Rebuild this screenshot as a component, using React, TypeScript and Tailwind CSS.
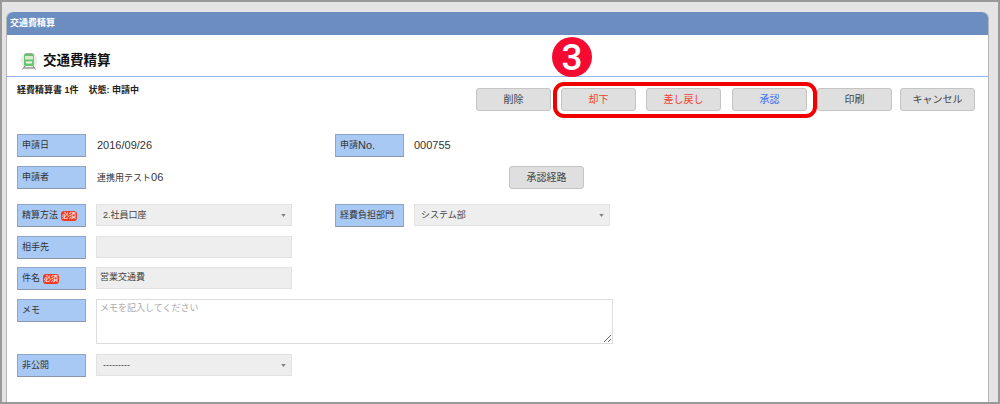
const font = {
  fontFamily: '"Liberation Sans", "Noto Sans CJK JP", sans-serif',
};

function TrainIcon() {
  return (
    <svg width="18" height="20" viewBox="0 0 18 20" className="shrink-0">
      <circle cx="9" cy="10" r="8.5" fill="#ececec" />
      <path d="M5 2.5h8l1 1V14l-1 1H5l-1-1V3.500z" fill="#67c56b" />
      <rect x="5" y="5" width="8" height="3.500" fill="#d8ecd0" />
      <rect x="6" y="2.500" width="6" height="1.200" fill="#8a9a8a" />
      <path d="M5.500 10.500h7l-1 2h-5z" fill="#f4f4f4" />
      <path d="M5 15l-2.500 3.500M13 15l2.500 3.500M4 17h10" stroke="#777" strokeWidth="1" fill="none" />
    </svg>
  );
}

function Btn({ label, color = "text-[#444]", className = "" }: { label: string; color?: string; className?: string }) {
  return (
    <button className={`h-[23px] w-[75px] rounded-[3px] border border-[#c4c4c4] bg-[#dfdfdf] text-[10px] ${color} ${className}`}>
      {label}
    </button>
  );
}

function Required() {
  return (
    <span className="ml-[3px] inline-flex h-[10px] w-[16px] items-center justify-center rounded-[3px] bg-[#ee3a22] text-[7px] leading-none text-white">
      必須
    </span>
  );
}

function Label({ text, required, children }: { text?: string; required?: boolean; children?: React.ReactNode }) {
  return (
    <div className="flex h-[23px] w-[69px] shrink-0 items-center border border-[#8ea6c8] border-b-[#8a96a8] bg-[#a9c9f5] pl-[4px] text-[9px] text-[#333]">
      {text}
      {children}
      {required && <Required />}
    </div>
  );
}

function SelectBox({ value }: { value: string }) {
  return (
    <div className="flex h-[22px] w-[196px] items-center justify-between border border-[#e2e2e2] bg-[#eeeeee] pl-[6px] pr-[5px] pt-[1px] text-[9px] text-[#444]">
      {value}
      <svg width="5" height="3" viewBox="0 0 6 4">
        <path d="M0 0h6L3 4z" fill="#808080" />
      </svg>
    </div>
  );
}

function Field({ label, required, children }: { label: React.ReactNode; required?: boolean; children?: React.ReactNode }) {
  return (
    <div className="flex w-[318px] shrink-0 items-start gap-[10px]">
      <Label required={required}>{label}</Label>
      {children}
    </div>
  );
}

export default function App() {
  return (
    <div style={font} className="flex h-[404px] w-[1000px] flex-col overflow-hidden border-2 border-b-2 border-[#999999] bg-[#e4e4e4] pl-[4px] pr-[9px] pt-[10px]">
      <div className="flex flex-1 flex-col rounded-t-[6px] border-x border-[#b5b5b5] bg-white">
        <div className="flex h-[23px] shrink-0 items-center rounded-t-[6px] bg-[#6b8dbf] pl-[3px] text-[9px] font-bold text-white">
          交通費精算
        </div>

        <div className="flex h-[42px] shrink-0 items-center gap-[5px] border-b border-[#93b6f2] pl-[13px] pt-[11px]">
          <TrainIcon />
          <span className="text-[13.500px] font-bold text-[#111]">交通費精算</span>
        </div>

        <div className="mt-[6px] flex h-[28px] shrink-0 items-start justify-between pl-[10px] pr-[13px]">
          <div className="pt-[1px] text-[9px] font-bold text-[#222]">
            経費精算書 1件<span className="ml-[10px]">状態: 申請中</span>
          </div>
          <div className="mt-[5px] flex items-start">
            <Btn label="削除" className="mr-[10px]" />
            <div className="relative flex gap-[10px]">
              <Btn label="却下" color="text-[#f0442e]" />
              <Btn label="差し戻し" color="text-[#f0442e]" />
              <Btn label="承認" color="text-[#3a74f0]" className="ml-[1px]" />
              <div className="absolute -bottom-[7px] -left-[8px] -right-[10px] -top-[6px] rounded-[11px] border-[4px] border-[#f00000]" />
              <div
                style={{ fontFamily: "Roboto, sans-serif" }}
                className="absolute -left-[9px] -top-[51px] flex h-[40px] w-[40px] items-center justify-center rounded-full bg-[#f50a32] text-[37px] font-medium leading-none text-white"
              >
                3
              </div>
            </div>
            <Btn label="印刷" className="ml-[10px]" />
            <Btn label="キャンセル" className="ml-[8px]" />
          </div>
        </div>

        <div className="mt-[23px] flex flex-col pl-[10px]">
          <div className="flex h-[23px]">
            <Field label="申請日">
              <span className="pl-[1px] pt-[3px] text-[11px] text-[#333]">2016/09/26</span>
            </Field>
            <Field label={<>申請<span className="text-[11px]">No.</span></>}>
              <span className="pt-[3px] text-[11px] text-[#333]">000755</span>
            </Field>
          </div>

          <div className="mt-[9px] flex h-[23px]">
            <Field label="申請者">
              <span className="pl-[1px] pt-[3px] text-[9px] text-[#333]">
                連携用テスト<span className="text-[11px]">06</span>
              </span>
            </Field>
            <div className="ml-[174px] flex">
              <Btn label="承認経路" />
            </div>
          </div>

          <div className="mt-[15px] flex h-[23px]">
            <Field label="精算方法" required>
              <SelectBox value="2.社員口座" />
            </Field>
            <Field label="経費負担部門">
              <SelectBox value="システム部" />
            </Field>
          </div>

          <div className="mt-[9px] flex h-[23px]">
            <Field label="相手先">
              <div className="h-[22px] w-[196px] border border-[#e2e2e2] bg-[#eeeeee]" />
            </Field>
          </div>

          <div className="mt-[8px] flex h-[23px]">
            <Field label="件名" required>
              <div className="flex h-[22px] w-[196px] items-center border border-[#e2e2e2] bg-[#eeeeee] pl-[3px] text-[9px] text-[#444]">
                営業交通費
              </div>
            </Field>
          </div>

          <div className="mt-[9px] flex h-[45px] items-start gap-[10px]">
            <Label text="メモ" />
            <textarea
              placeholder="メモを記入してください"
              className="h-[45px] w-[517px] border border-[#dddddd] bg-white px-[3px] pt-[2px] text-[9px] text-[#444] outline-none placeholder:text-[#aaaaaa]"
            />
          </div>

          <div className="mt-[10px] flex h-[23px]">
            <Field label="非公開">
              <SelectBox value="---------" />
            </Field>
          </div>
        </div>
      </div>
    </div>
  );
}
